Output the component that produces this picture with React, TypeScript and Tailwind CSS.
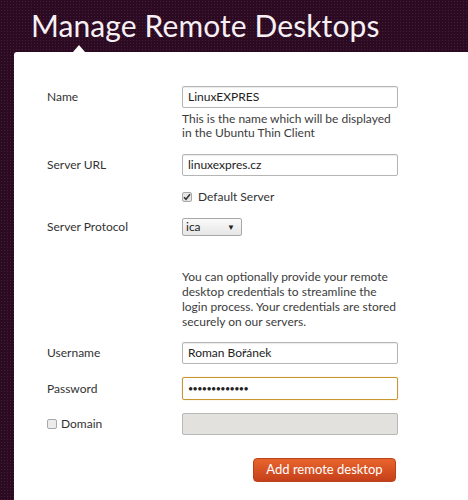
import React from 'react';

const font = { fontFamily: 'Lato, "Open Sans", sans-serif' };

function Label({ children }: { children: React.ReactNode }) {
  return <div className="w-[135px] shrink-0 text-[12px] text-[#333]">{children}</div>;
}

export default function App() {
  return (
    <div
      style={font}
      className="w-[468px] h-[500px] overflow-hidden bg-[#2c0a22] bg-[radial-gradient(circle,#40203a_0.8px,transparent_0.9px)] bg-[length:3px_3px] flex flex-col"
    >
      <div className="h-[52px] shrink-0 pl-[31px] pt-[3px] text-[30px] leading-[44px] text-[#f6f0f4] tracking-[0.1px]">
        Manage Remote Desktops
      </div>
      <div className="relative ml-[14px] flex-1 bg-white rounded-tl-[3px] pl-[33px] pt-[34px]">
        <div className="absolute left-[59px] -top-[7px] w-0 h-0 border-l-[6px] border-r-[6px] border-b-[7px] border-l-transparent border-r-transparent border-b-white" />

        <div className="flex items-center">
          <Label>Name</Label>
          <div className="w-[216px] h-[22px] border border-[#b5b5b5] rounded-[2px] shadow-[inset_0_1px_1px_rgba(0,0,0,0.08)] px-[5px] text-[12px] leading-[20px] text-[#222]">
            LinuxEXPRES
          </div>
        </div>
        <div className="ml-[135px] mt-[4px] w-[215px] text-[12px] leading-[14px] text-[#3c3c3c]">
          This is the name which will be displayed in the Ubuntu Thin Client
        </div>

        <div className="flex items-center mt-[14px]">
          <Label>Server URL</Label>
          <div className="w-[216px] h-[22px] border border-[#b5b5b5] rounded-[2px] shadow-[inset_0_1px_1px_rgba(0,0,0,0.08)] px-[5px] text-[12px] leading-[20px] text-[#222]">
            linuxexpres.cz
          </div>
        </div>

        <div className="flex items-center mt-[13px] h-[16px] ml-[135px]">
          <div className="w-[10px] h-[10px] border border-[#a8a8a8] rounded-[2px] bg-[#e6e6e6] flex items-center justify-center">
            <svg width="8" height="8" viewBox="0 0 8 8">
              <path d="M1 4.2 L3 6.3 L7 1.2" fill="none" stroke="#333" strokeWidth="1.5" />
            </svg>
          </div>
          <span className="ml-[6px] text-[12px] text-[#333]">Default Server</span>
        </div>

        <div className="flex items-center mt-[13px]">
          <Label>Server Protocol</Label>
          <div className="w-[60px] h-[18px] border border-[#a8a8a8] rounded-[2px] bg-gradient-to-b from-[#fafafa] to-[#e6e6e6] flex items-center justify-between pl-[3px] pr-[6px] text-[12px] text-[#222]">
            <span>ica</span>
            <span className="text-[8px]">▼</span>
          </div>
        </div>

        <div className="ml-[135px] mt-[33px] w-[220px] text-[12px] leading-[15px] text-[#3c3c3c]">
          You can optionally provide your remote desktop credentials to streamline the login process. Your credentials are stored securely on our servers.
        </div>

        <div className="flex items-center mt-[13px]">
          <Label>Username</Label>
          <div className="w-[216px] h-[22px] border border-[#b5b5b5] rounded-[2px] shadow-[inset_0_1px_1px_rgba(0,0,0,0.08)] px-[5px] text-[12px] leading-[20px] text-[#222]">
            Roman Bořánek
          </div>
        </div>

        <div className="flex items-center mt-[13px]">
          <Label>Password</Label>
          <div className="w-[216px] h-[23px] border border-[#c8962f] rounded-[2px] shadow-[0_0_1px_#e0b25a] px-[5px] text-[9px] leading-[21px] text-[#222] tracking-[-0.6px]">
            •••••••••••••
          </div>
        </div>

        <div className="flex items-center mt-[13px]">
          <div className="w-[135px] shrink-0 flex items-center">
            <div className="w-[10px] h-[10px] border border-[#a8a8a8] rounded-[2px] bg-[#ececec]" />
            <span className="ml-[4px] text-[12px] text-[#333]">Domain</span>
          </div>
          <div className="w-[216px] h-[22px] border border-[#b8b8b8] rounded-[2px] bg-[#e3e1de]" />
        </div>

        <div className="w-[351px] flex justify-end mt-[23px] pr-[2px]">
          <div className="w-[143px] h-[24px] rounded-[4px] bg-gradient-to-b from-[#e9642c] to-[#c5401a] border border-[#b8421c] flex items-center justify-center text-[13px] text-white">
            Add remote desktop
          </div>
        </div>
      </div>
    </div>
  );
}
